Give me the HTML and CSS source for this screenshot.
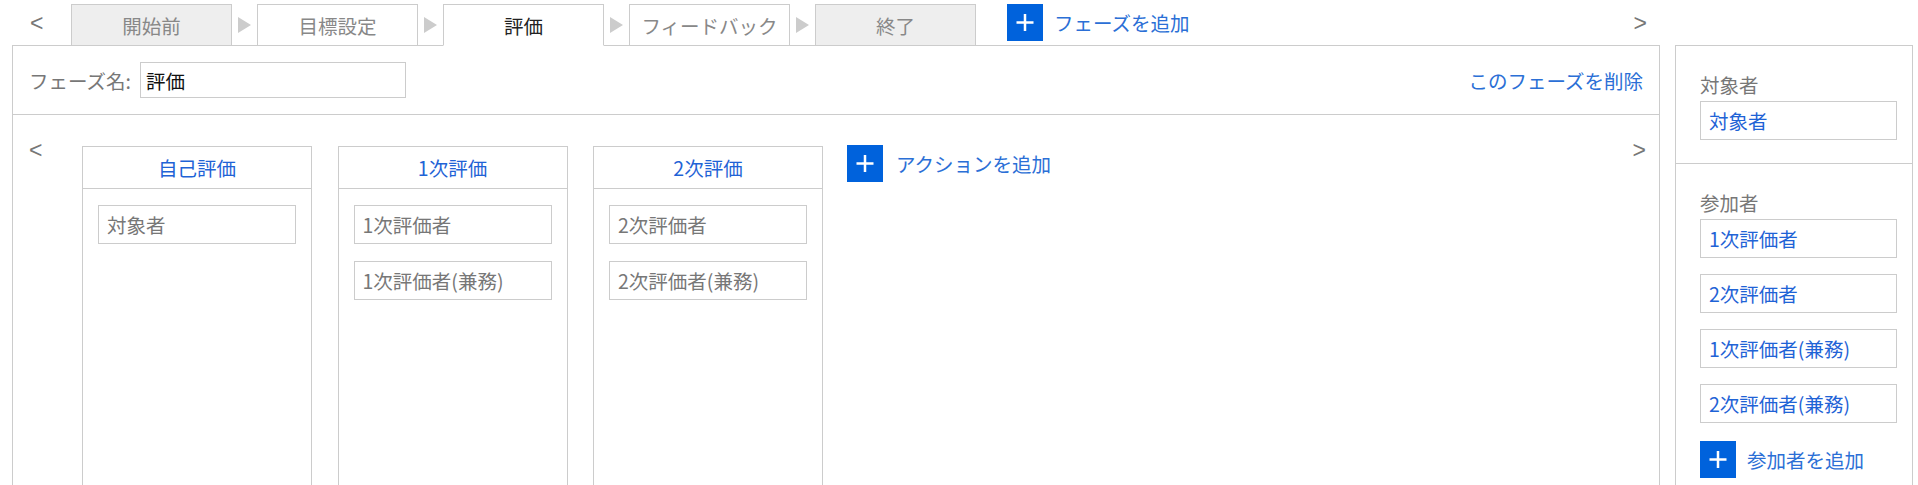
FILE: index.html
```html
<!DOCTYPE html>
<html lang="ja">
<head>
  <meta charset="UTF-8">
  <title>フェーズ設定</title>
  <link rel="stylesheet" href="styles.css">
</head>
<body>
  <div class="page">
    <div class="main">
      <!-- フェーズのタブ -->
      <div class="phase-bar">
        <span class="nav prev">&lt;</span>
        <div class="tab gray">開始前</div>
        <span class="arrow"></span>
        <div class="tab">目標設定</div>
        <span class="arrow"></span>
        <div class="tab active">評価</div>
        <span class="arrow"></span>
        <div class="tab">フィードバック</div>
        <span class="arrow"></span>
        <div class="tab gray">終了</div>
        <a class="add add-phase">
          <svg class="plus" viewBox="0 0 36 36"><path d="M18 9.5v17M9.5 18h17" stroke="#fff" stroke-width="2.5"/></svg>
          フェーズを追加
        </a>
        <span class="nav next">&gt;</span>
      </div>

      <div class="panel">
        <div class="panel-head">
          <label class="name-label">フェーズ名:</label>
          <input type="text" class="name-input" value="評価">
          <a class="delete-link">このフェーズを削除</a>
        </div>

        <!-- アクション一覧 -->
        <div class="panel-body">
          <span class="nav prev">&lt;</span>
          <div class="actions">
            <div class="action">
              <div class="action-title">自己評価</div>
              <div class="role-list">
                <div class="role">対象者</div>
              </div>
            </div>
            <div class="action">
              <div class="action-title">1次評価</div>
              <div class="role-list">
                <div class="role">1次評価者</div>
                <div class="role">1次評価者(兼務)</div>
              </div>
            </div>
            <div class="action">
              <div class="action-title">2次評価</div>
              <div class="role-list">
                <div class="role">2次評価者</div>
                <div class="role">2次評価者(兼務)</div>
              </div>
            </div>
          </div>
          <a class="add add-action">
            <svg class="plus" viewBox="0 0 36 36"><path d="M18 9.5v17M9.5 18h17" stroke="#fff" stroke-width="2.5"/></svg>
            アクションを追加
          </a>
          <span class="nav next">&gt;</span>
        </div>
      </div>
    </div>

    <!-- 対象者・参加者 -->
    <aside class="side">
      <div class="side-section">
        <div class="side-label">対象者</div>
        <div class="role blue">対象者</div>
      </div>
      <div class="side-section">
        <div class="side-label">参加者</div>
        <div class="side-list">
          <div class="role blue">1次評価者</div>
          <div class="role blue">2次評価者</div>
          <div class="role blue">1次評価者(兼務)</div>
          <div class="role blue">2次評価者(兼務)</div>
        </div>
        <a class="add add-member">
          <svg class="plus" viewBox="0 0 36 36"><path d="M18 9.5v17M9.5 18h17" stroke="#fff" stroke-width="2.5"/></svg>
          参加者を追加
        </a>
      </div>
    </aside>
  </div>
</body>
</html>
```

FILE: styles.css
```css
* {
  box-sizing: border-box;
}

body {
  margin: 0;
  font-family: "Noto Sans CJK JP", "Noto Sans", sans-serif;
  font-size: 19.5px;
  color: #777;
  background: #fff;
}

.page {
  display: flex;
  align-items: flex-start;
  height: 100vh;
  overflow: hidden;
  padding-left: 12px;
}

.main {
  width: 1648px;
  flex-shrink: 0;
}

.nav {
  font-family: "Liberation Sans", Arial, sans-serif;
  font-size: 23px;
  color: #777;
  line-height: 24px;
}

/* タブ */
.phase-bar {
  position: relative;
  display: flex;
  align-items: flex-end;
  height: 45px;
}

.phase-bar .prev {
  width: 59px;
  padding-left: 18px;
  align-self: center;
}

.phase-bar .next {
  margin-left: auto;
  margin-right: 13px;
  align-self: center;
}

.tab {
  width: 161px;
  height: 42px;
  margin-bottom: -1px;
  border: 1px solid #ccc;
  background: #fff;
  display: flex;
  align-items: center;
  justify-content: center;
  color: #888;
}

.tab.gray {
  background: #eee;
}

.tab.active {
  color: #222;
  border-bottom-color: #fff;
}

.arrow {
  width: 25px;
  height: 42px;
  margin-bottom: -1px;
  display: flex;
  align-items: center;
  justify-content: center;
}

.arrow::before {
  content: "";
  border-left: 13px solid #ccc;
  border-top: 8px solid transparent;
  border-bottom: 8px solid transparent;
}

.add {
  display: flex;
  align-items: center;
  color: #2b6fd6;
  cursor: pointer;
}

.plus {
  width: 36px;
  height: 37px;
  margin-right: 11px;
  background: #0062dc;
  flex-shrink: 0;
}

.add-phase {
  margin-left: 31px;
  align-self: flex-start;
  margin-top: 4px;
}

/* パネル */
.panel {
  height: 460px;
  border: 1px solid #ccc;
}

.panel-head {
  display: flex;
  align-items: center;
  height: 69px;
  padding: 0 16px;
  border-bottom: 1px solid #ccc;
}

.name-label {
  color: #777;
}

.name-input {
  width: 266px;
  height: 36px;
  margin-left: 9px;
  padding: 0 5px;
  border: 1px solid #ccc;
  font: inherit;
  color: #111;
  outline: none;
}

.delete-link {
  margin-left: auto;
  color: #2b6fd6;
  cursor: pointer;
}

.panel-body {
  display: flex;
  align-items: flex-start;
  padding: 31px 0 0 16px;
}

.panel-body .prev {
  width: 53px;
  margin-top: -8px;
}

.panel-body .next {
  margin-left: auto;
  margin-right: 13px;
  margin-top: -8px;
}

.actions {
  display: flex;
  gap: 25.5px;
}

.action {
  width: 230px;
  height: 400px;
  border: 1px solid #ccc;
  border-bottom: none;
}

.action-title {
  height: 42px;
  line-height: 41px;
  text-align: center;
  color: #1f63d6;
  border-bottom: 1px solid #ccc;
}

.role-list {
  display: flex;
  flex-direction: column;
  gap: 17px;
  padding: 16px 15px;
}

.role {
  height: 39px;
  line-height: 37px;
  padding: 0 8px;
  border: 1px solid #ccc;
  color: #777;
  white-space: nowrap;
}

.role.blue {
  width: 197px;
  color: #1f63d6;
}

.add-action {
  margin-left: 24px;
  margin-top: -1px;
}

.add-action .plus {
  margin-right: 13px;
}

/* 右側 */
.side {
  width: 238px;
  height: 460px;
  margin-top: 45px;
  margin-left: 15px;
  flex-shrink: 0;
  border: 1px solid #ccc;
}

.side-section {
  padding: 25px 15px 23px 24px;
}

.side-section + .side-section {
  border-top: 1px solid #ccc;
}

.side-label {
  line-height: 28px;
  margin-bottom: 2px;
  color: #777;
}

.side-list {
  display: flex;
  flex-direction: column;
  gap: 16px;
}

.add-member {
  margin-top: 18px;
}
```
